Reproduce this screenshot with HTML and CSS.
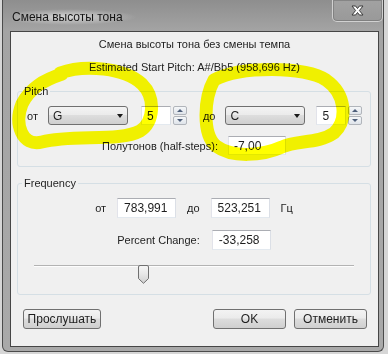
FILE: index.html
```html
<!doctype html>
<html lang="ru">
  <head>
    <meta charset="utf-8">
    <title>Смена высоты тона</title>
    <link rel="stylesheet" href="styles.css">
  </head>
  <body>

    <div class="window">
      <div class="titlebar">
        <span class="title">Смена высоты тона</span>
        <button class="close" type="button" aria-label="Закрыть">
          <svg width="13" height="11" viewBox="0 0 13 11"><path d="M1 1 H4.6 L6.5 3.5 L8.4 1 H12 L8.4 5.5 L12 10 H8.4 L6.5 7.5 L4.6 10 H1 L4.6 5.5 Z" fill="#fff" stroke="#3b3b3b" stroke-width="1" stroke-linejoin="round"/></svg>
        </button>
      </div>

      <div class="client">
        <p class="caption">Смена высоты тона без смены темпа</p>
        <p class="caption caption-second">Estimated Start Pitch: A#/Bb5 (958,696 Hz)</p>

        <fieldset class="group group-pitch">
          <legend>Pitch</legend>
          <div class="pitch-row">
            <span>от</span>
            <div class="combo">G<i class="combo-arrow"></i></div>
            <div class="spin">
              <span class="field field-spin">5</span>
              <span class="spin-btns"><span class="spin-btn spin-up"></span><span class="spin-btn spin-down"></span></span>
            </div>
            <span class="label-to">до</span>
            <div class="combo">C<i class="combo-arrow"></i></div>
            <div class="spin spin-right">
              <span class="field field-spin">5</span>
              <span class="spin-btns"><span class="spin-btn spin-up"></span><span class="spin-btn spin-down"></span></span>
            </div>
          </div>
          <div class="line steps-line">
            <span>Полутонов (half-steps):</span>
            <span class="field field-steps">-7,00</span>
          </div>
        </fieldset>

        <fieldset class="group group-freq">
          <legend>Frequency</legend>
          <div class="line freq-line">
            <span>от</span>
            <span class="field field-freq">783,991</span>
            <span>до</span>
            <span class="field field-freq">523,251</span>
            <span>Гц</span>
          </div>
          <div class="line percent-line">
            <span>Percent Change:</span>
            <span class="field field-freq">-33,258</span>
          </div>
          <div class="slider">
            <div class="slider-track"></div>
            <svg class="slider-thumb" style="left: 104px" width="11" height="19" viewBox="0 0 11 19">
              <defs>
                <linearGradient id="thumb" x1="0" y1="0" x2="0" y2="1">
                  <stop offset="0" stop-color="#f6f6f6"/>
                  <stop offset="0.5" stop-color="#e6e6e6"/>
                  <stop offset="1" stop-color="#cfcfcf"/>
                </linearGradient>
              </defs>
              <path d="M2 0.5 H9 Q10.5 0.5 10.5 2 V13.5 L5.5 18.3 L0.5 13.5 V2 Q0.5 0.5 2 0.5 Z" fill="url(#thumb)" stroke="#707070"/>
            </svg>
          </div>
        </fieldset>

        <div class="buttons">
          <button class="btn btn-preview" type="button">Прослушать</button>
          <button class="btn" type="button">OK</button>
          <button class="btn" type="button">Отменить</button>
        </div>
      </div>
    </div>

    <!-- highlighter strokes drawn over the screenshot -->
    <svg class="marker" width="388" height="354" viewBox="0 0 388 354">
      <path d="M 60 73 C 85 64, 125 68, 142 84 C 156 98, 154 122, 140 131 C 120 142, 72 134, 42 142 C 22 147, 14 124, 22 104 C 30 88, 44 80, 62 74"/>
      <path d="M 214 80 C 240 66, 305 66, 326 80 C 346 94, 348 120, 334 133 C 318 144, 296 140, 282 147 C 262 156, 232 158, 216 146 C 202 134, 204 98, 214 80"/>
    </svg>

  </body>
</html>
```

FILE: styles.css
```css
* {
  box-sizing: border-box;
}

body {
  margin: 0;
  width: 388px;
  height: 354px;
  overflow: hidden;
  position: relative;
  background: #d6d6d6;
  font-family: "Liberation Sans", Arial, sans-serif;
  font-size: 11px;
  color: #1e1e1e;
}

/* Window frame */
.window {
  width: 382px;
  height: 352px;
  margin-left: 2px;
  border: 1px solid #4b4b4b;
  border-top: none;
  border-radius: 0 0 6px 6px;
  background: linear-gradient(#8e8e8e, #a4a4a4 31px, #a9a9a9);
  padding: 0 4px 4px 7px;
  display: flex;
  flex-direction: column;
}

.titlebar {
  height: 31px;
  margin-right: -4px;
  display: flex;
  align-items: flex-start;
  flex-shrink: 0;
}
.title {
  margin: 9px 0 0 2px;
  padding-right: 14px;
  font-size: 12px;
  line-height: 16px;
  color: #141414;
  background: radial-gradient(ellipse at 45% 50%, rgba(235, 235, 235, 0.75), rgba(235, 235, 235, 0) 70%);
}
.close {
  margin-left: auto;
  width: 51px;
  height: 22px;
  padding: 0;
  border: 1px solid rgba(230, 230, 230, 0.7);
  border-top: none;
  border-radius: 0 0 5px 5px;
  background: linear-gradient(#a2a2a2, #999);
  box-shadow: inset 0 0 0 1px rgba(80, 80, 80, 0.35);
  display: flex;
  align-items: center;
  justify-content: center;
}

/* Dialog body */
.client {
  flex: 1;
  border: 1px solid #464646;
  background: #f0f0f0;
  display: flex;
  flex-direction: column;
}

.caption {
  margin: 4px 0 0;
  text-align: center;
  line-height: 16px;
}
.caption-second {
  margin-top: 7px;
}

/* Group boxes */
.group {
  margin: 9px 7px 0 6px;
  min-width: 0;
  border: 1px solid #d5dfe5;
  border-radius: 3px;
  padding: 8px 0 11px;
}
.group legend {
  margin-left: 4px;
  padding: 0 2px;
  line-height: 14px;
}

.pitch-row {
  height: 19px;
  padding-left: 9px;
  display: flex;
  align-items: center;
}
.combo {
  position: relative;
  width: 80px;
  height: 19px;
  margin-left: 10px;
  padding-left: 4px;
  border: 1px solid #707070;
  border-radius: 3px;
  background: linear-gradient(#f3f3f3, #ebebeb 45%, #dddddd 50%, #cfcfcf);
  display: flex;
  align-items: center;
  font-size: 12px;
}
.combo-arrow {
  margin-left: auto;
  margin-right: 4px;
  border-top: 4px solid #1a1a1a;
  border-left: 3.5px solid transparent;
  border-right: 3.5px solid transparent;
}
.label-to {
  margin-left: 16px;
}

.field {
  height: 19px;
  padding: 0 5px;
  background: #fff;
  border: 1px solid #abadb3;
  border-color: #abadb3 #dbdfe6 #e3e9ef #e2e3ea;
  display: flex;
  align-items: center;
  font-size: 12px;
}
.spin {
  margin-left: 13px;
  display: flex;
  align-items: center;
}
.spin-right {
  margin-left: 11px;
}
.field-spin {
  width: 30px;
}
.spin-btns {
  margin-left: 2px;
  display: flex;
  flex-direction: column;
  gap: 1px;
}
.spin-btn {
  width: 14px;
  height: 9px;
  border: 1px solid #b1b5bb;
  border-radius: 2px;
  background: linear-gradient(#f5f7f9, #dfe4ea);
  display: flex;
  align-items: center;
  justify-content: center;
}
.spin-up::after,
.spin-down::after {
  content: "";
  border-left: 3px solid transparent;
  border-right: 3px solid transparent;
}
.spin-up::after {
  border-bottom: 3px solid #4e5f7a;
}
.spin-down::after {
  border-top: 3px solid #4e5f7a;
}

.line {
  display: flex;
  align-items: center;
  justify-content: center;
}
.steps-line {
  margin-top: 11px;
  gap: 10px;
}
.field-steps {
  width: 58px;
}

.freq-line {
  gap: 11px;
}
.percent-line {
  margin-top: 12px;
  gap: 12px;
}
.field-freq {
  width: 59px;
  height: 20px;
  padding-left: 6px;
}

/* Slider */
.slider {
  position: relative;
  height: 18px;
  margin: 15px 16px 0;
}
.slider-track {
  margin-top: 5px;
  height: 2px;
  border-top: 1px solid #b3b3b3;
  border-bottom: 1px solid #fdfdfd;
}
.slider-thumb {
  position: absolute;
  top: 0;
}

/* Bottom buttons */
.buttons {
  margin-top: 14px;
  padding: 0 11px 0 12px;
  display: flex;
  gap: 8px;
}
.btn {
  width: 73px;
  height: 20px;
  padding: 0;
  border: 1px solid #707070;
  border-radius: 3px;
  background: linear-gradient(#f3f3f3, #ebebeb 45%, #dddddd 50%, #cfcfcf);
  font-family: inherit;
  font-size: 12px;
  color: #1e1e1e;
}
.btn-preview {
  width: 78px;
  margin-right: auto;
}

/* Yellow highlighter marks */
.marker {
  position: absolute;
  top: 0;
  left: 0;
  pointer-events: none;
  mix-blend-mode: multiply;
}
.marker path {
  fill: none;
  stroke: #ffff00;
  stroke-width: 13;
  stroke-linecap: round;
  stroke-linejoin: round;
}
```
